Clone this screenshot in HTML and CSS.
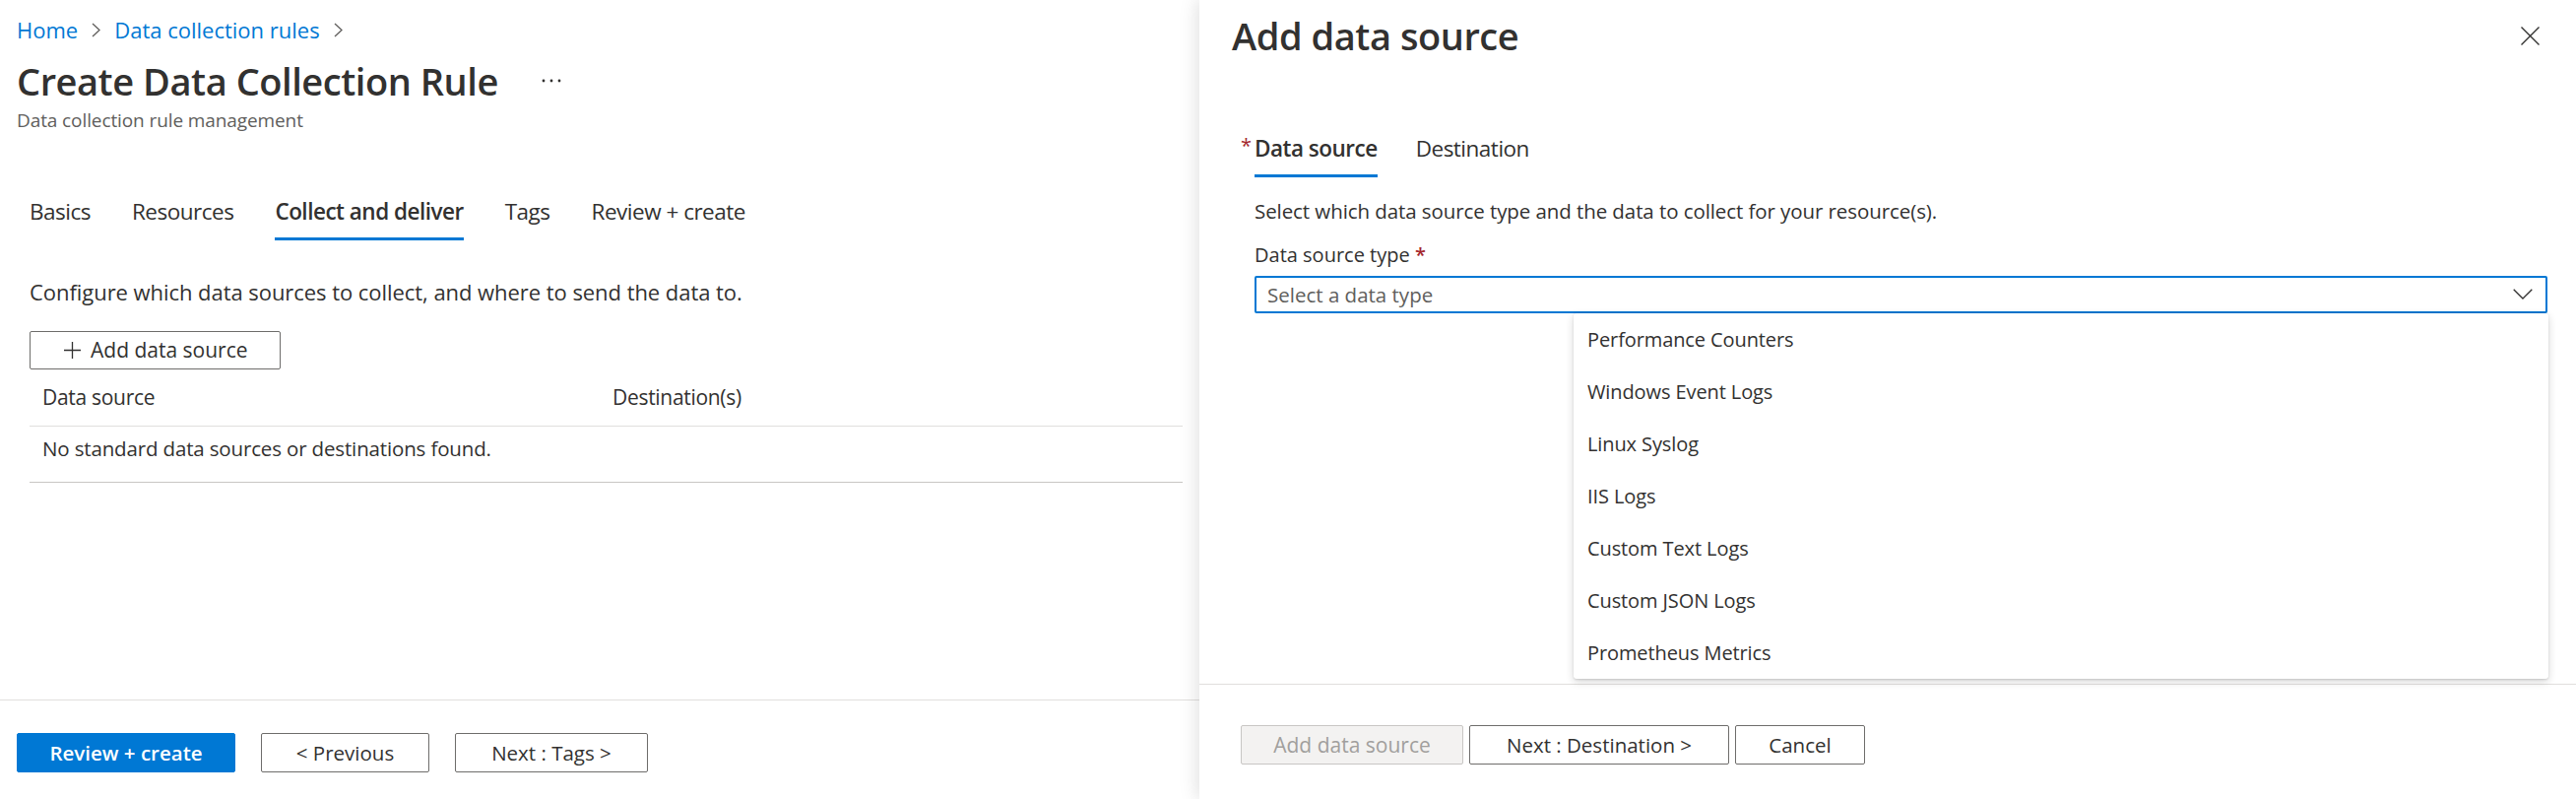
FILE: index.html
```html
<!DOCTYPE html>
<html lang="en">
<head>
<meta charset="utf-8">
<title>Create Data Collection Rule</title>
<link rel="stylesheet" href="styles.css">
</head>
<body>
<div class="app">
  <section class="main">
    <div class="main-body">
      <nav class="crumbs">
        <a class="crumb">Home</a>
        <svg class="crumb-sep" width="9" height="15" viewBox="0 0 9 15"><path d="M1 1 L8 7.5 L1 14" fill="none" stroke="#605e5c" stroke-width="1.3"/></svg>
        <a class="crumb">Data collection rules</a>
        <svg class="crumb-sep" width="9" height="15" viewBox="0 0 9 15"><path d="M1 1 L8 7.5 L1 14" fill="none" stroke="#605e5c" stroke-width="1.3"/></svg>
      </nav>
      <div class="title-row">
        <h1 class="title">Create Data Collection Rule</h1>
        <svg class="more" width="22" height="6" viewBox="0 0 22 6"><circle cx="3" cy="3" r="1.4" fill="#323130"/><circle cx="11" cy="3" r="1.4" fill="#323130"/><circle cx="19" cy="3" r="1.4" fill="#323130"/></svg>
      </div>
      <div class="subtitle">Data collection rule management</div>

      <div class="tabs main-tabs">
        <div class="tab">Basics</div>
        <div class="tab">Resources</div>
        <div class="tab active">Collect and deliver</div>
        <div class="tab">Tags</div>
        <div class="tab">Review + create</div>
      </div>

      <div class="section">
        <p class="desc">Configure which data sources to collect, and where to send the data to.</p>
        <button class="btn btn-add">
          <svg class="plus" width="17" height="17" viewBox="0 0 17 17"><path d="M8.5 0 V17 M0 8.5 H17" stroke="#323130" stroke-width="1.3" fill="none"/></svg>
          <span>Add data source</span>
        </button>
        <div class="table">
          <div class="thead">
            <span>Data source</span>
            <span>Destination(s)</span>
          </div>
          <div class="trow">No standard data sources or destinations found.</div>
        </div>
      </div>
    </div>
    <footer class="footer main-foot">
      <button class="btn btn-primary w-review">Review + create</button>
      <button class="btn w-prev">&lt; Previous</button>
      <button class="btn w-next">Next : Tags &gt;</button>
    </footer>
  </section>

  <aside class="blade">
    <div class="blade-body">
      <div class="blade-head">
        <h2 class="blade-title">Add data source</h2>
        <svg class="close" width="19" height="19" viewBox="0 0 19 19"><path d="M0.5 0.5 L18.5 18.5 M18.5 0.5 L0.5 18.5" stroke="#323130" stroke-width="1.4" fill="none"/></svg>
      </div>
      <div class="blade-content">
        <div class="tabs blade-tabs">
          <div class="tab active required">Data source</div>
          <div class="tab">Destination</div>
        </div>
        <p class="blade-desc">Select which data source type and the data to collect for your resource(s).</p>
        <label class="field-label">Data source type <span class="req">*</span></label>
        <div class="dropdown-wrap">
          <div class="dropdown">
            <span class="placeholder">Select a data type</span>
            <svg class="chev" width="20" height="11" viewBox="0 0 20 11"><path d="M0.7 0.7 L10 10 L19.3 0.7" fill="none" stroke="#323130" stroke-width="1.3"/></svg>
          </div>
          <ul class="menu">
            <li class="menu-item">Performance Counters</li>
            <li class="menu-item">Windows Event Logs</li>
            <li class="menu-item">Linux Syslog</li>
            <li class="menu-item">IIS Logs</li>
            <li class="menu-item">Custom Text Logs</li>
            <li class="menu-item">Custom JSON Logs</li>
            <li class="menu-item">Prometheus Metrics</li>
          </ul>
        </div>
      </div>
    </div>
    <footer class="footer blade-foot">
      <button class="btn btn-disabled w-add">Add data source</button>
      <button class="btn w-dest">Next : Destination &gt;</button>
      <button class="btn w-cancel">Cancel</button>
    </footer>
  </aside>
</div>
</body>
</html>
```
FILE: styles.css
```css
* { box-sizing: border-box; }
html, body { margin: 0; padding: 0; }
body {
  font-family: "Open Sans", "Noto Sans", sans-serif;
  color: #323130;
  background: #ffffff;
}
.app {
  display: flex;
  width: 2616px;
  height: 811px;
  overflow: hidden;
}

/* ---------- main page ---------- */
.main {
  width: 1218px;
  flex: none;
  display: flex;
  flex-direction: column;
}
.main-body {
  flex: 1;
  padding: 15px 17px 0 17px;
}
.crumbs {
  display: flex;
  align-items: center;
  height: 30px;
  font-size: 22px;
  line-height: 30px;
}
.crumb { color: #0078d4; text-decoration: none; }
.crumb-sep { margin: 0 14px; flex: none; }

.title-row {
  display: flex;
  align-items: center;
  margin-top: 11px;
}
.title {
  margin: 0;
  font-size: 38px;
  line-height: 52px;
  font-weight: 600;
  letter-spacing: -0.45px;
}
.more { margin-left: 43px; }
.subtitle {
  font-size: 19px;
  line-height: 28px;
  color: #605e5c;
  letter-spacing: -0.1px;
}

.tabs {
  display: flex;
  gap: 42px;
}
.tab {
  font-size: 22.5px;
  line-height: 32px;
  letter-spacing: -0.5px;
  padding-bottom: 9.5px;
  border-bottom: 3px solid transparent;
}
.tab.active {
  border-bottom-color: #0078d4;
  font-weight: 600;
}
.main-tabs {
  margin-top: 63px;
  padding-left: 13px;
}

.section { padding-left: 13px; }
.desc {
  margin: 37px 0 0 0;
  font-size: 22px;
  line-height: 30px;
  letter-spacing: -0.05px;
}

.btn {
  font-family: inherit;
  font-size: 20.5px;
  color: #323130;
  background: #ffffff;
  border: 1px solid #6e6d6b;
  border-radius: 2px;
  height: 40px;
  padding: 0;
  display: inline-flex;
  align-items: center;
  justify-content: center;
}
.btn-add {
  margin-top: 25px;
  height: 39px;
  width: 255px;
  justify-content: flex-start;
  padding-left: 34px;
  gap: 10px;
  font-size: 21px;
}
.plus { flex: none; }

.table { width: 1171px; }
.thead {
  display: grid;
  grid-template-columns: 579px 1fr;
  padding-left: 13px;
  height: 58px;
  align-items: center;
  font-size: 21px;
  font-weight: 500;
  letter-spacing: -0.3px;
  border-bottom: 1px solid #e1dfdd;
}
.trow {
  padding: 8px 0 20px 13px;
  font-size: 20.5px;
  line-height: 28px;
  letter-spacing: -0.15px;
  border-bottom: 1px solid #c8c6c4;
}

.footer {
  flex: none;
  display: flex;
  border-top: 1px solid #e1dfdd;
}
.main-foot {
  height: 101px;
  padding: 33px 0 0 17px;
  gap: 26px;
}
.btn-primary {
  background: #0078d4;
  border-color: #0078d4;
  color: #ffffff;
  font-weight: 600;
}
.w-review { width: 222px; }
.w-prev { width: 171px; }
.w-next { width: 196px; }

/* ---------- blade ---------- */
.blade {
  flex: 1;
  display: flex;
  flex-direction: column;
  background: #ffffff;
  position: relative;
  z-index: 2;
  box-shadow: -2px 0 18px rgba(0, 0, 0, 0.13);
}
.blade-body { flex: 1; }
.blade-head {
  display: flex;
  align-items: center;
  justify-content: space-between;
  padding: 10px 37px 0 33px;
}
.blade-title {
  margin: 0;
  font-size: 38px;
  line-height: 52px;
  font-weight: 600;
  letter-spacing: -0.45px;
}
.blade-content {
  padding: 0 29px 0 56px;
}
.blade-tabs {
  margin-top: 73px;
  gap: 39px;
}
.tab.required { position: relative; }
.tab.required::before {
  content: "*";
  position: absolute;
  left: -14px;
  top: -3px;
  color: #a4262c;
  font-size: 20px;
  font-weight: 400;
}
.blade-desc {
  margin: 20px 0 0 0;
  font-size: 20.5px;
  line-height: 28px;
  letter-spacing: -0.08px;
}
.field-label {
  display: block;
  margin-top: 17px;
  font-size: 20px;
  line-height: 28px;
}
.req { color: #a4262c; font-weight: 600; }

.dropdown-wrap {
  position: relative;
  margin-top: 7px;
}
.dropdown {
  height: 38px;
  border: 2px solid #0078d4;
  border-radius: 2px;
  display: flex;
  align-items: center;
  justify-content: space-between;
  padding: 0 13px 0 11px;
}
.placeholder {
  font-size: 20.5px;
  color: #605e5c;
}
.chev { flex: none; }

.menu {
  position: absolute;
  top: 38px;
  left: 324px;
  right: -1px;
  margin: 0;
  padding: 0;
  list-style: none;
  background: #ffffff;
  border-radius: 3px;
  box-shadow: 0 3px 8px rgba(0, 0, 0, 0.16), 0 0.6px 2px rgba(0, 0, 0, 0.12);
}
.menu-item {
  height: 53px;
  line-height: 53px;
  padding-left: 14px;
  font-size: 20px;
  letter-spacing: -0.1px;
}

.blade-foot {
  height: 117px;
  padding: 41px 0 0 42px;
  gap: 6px;
}
.btn-disabled {
  background: #f3f2f1;
  border-color: #c8c6c4;
  color: #a19f9d;
}
.w-add { width: 226px; font-size: 21px; }
.w-dest { width: 264px; }
.w-cancel { width: 132px; }
```
